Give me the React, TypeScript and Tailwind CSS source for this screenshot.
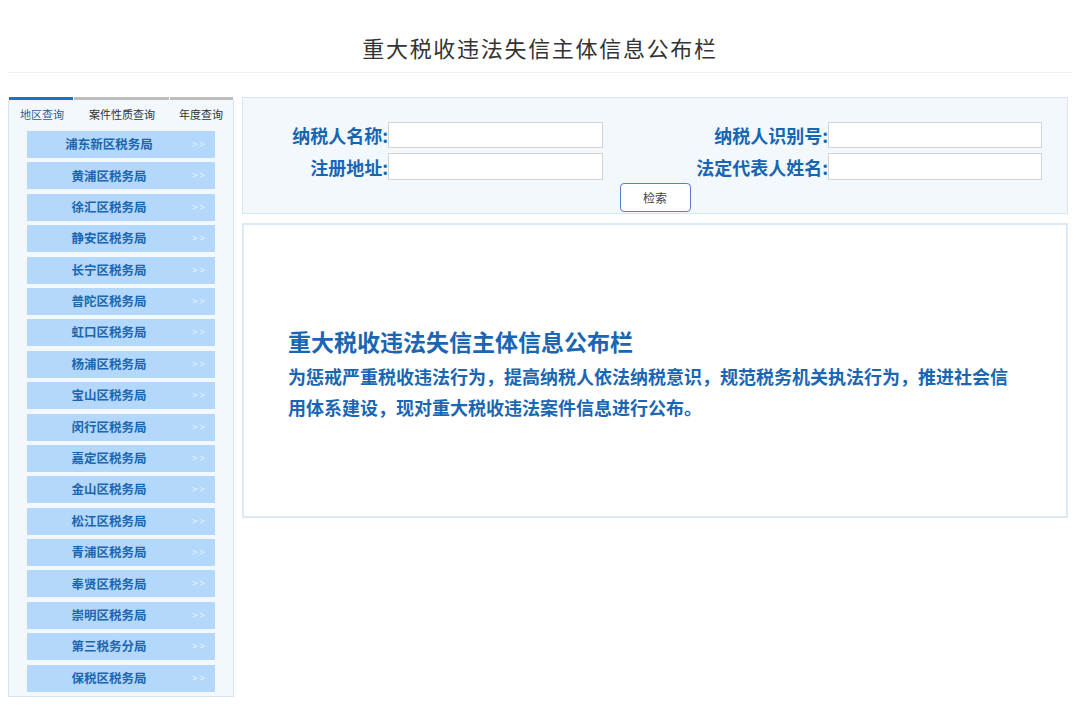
import React from "react";

const offices = [
  "浦东新区税务局",
  "黄浦区税务局",
  "徐汇区税务局",
  "静安区税务局",
  "长宁区税务局",
  "普陀区税务局",
  "虹口区税务局",
  "杨浦区税务局",
  "宝山区税务局",
  "闵行区税务局",
  "嘉定区税务局",
  "金山区税务局",
  "松江区税务局",
  "青浦区税务局",
  "奉贤区税务局",
  "崇明区税务局",
  "第三税务分局",
  "保税区税务局",
];

const font = { fontFamily: '"Noto Sans CJK SC", "Noto Sans", sans-serif' };

export default function App() {
  return (
    <div className="w-[1080px] h-[711px] bg-white overflow-hidden" style={font}>
      {/* header */}
      <div className="mx-[8px] h-[73px] border-b border-[#eeeeee] flex items-center justify-center pt-[22px]">
        <h1 className="text-[22px] leading-[30px] tracking-[1.7px] text-[#333333] font-normal">
          重大税收违法失信主体信息公布栏
        </h1>
      </div>

      <div className="flex mt-[24px] ml-[8px] gap-[8px]">
        {/* sidebar */}
        <div className="w-[226px] h-[600px] flex flex-col">
          <div className="flex h-[3px] pl-[1px]">
            <div className="w-[64px] bg-[#1a73c8]" />
            <div className="w-[95px] ml-[1px] bg-[#bdbdbd]" />
            <div className="w-[63px] ml-[1px] bg-[#bdbdbd]" />
          </div>
          <div className="flex-1 bg-[#f3f8fd] border border-t-0 border-[#d6e4f2] flex flex-col">
            <div className="flex h-[28px] items-center text-[11px] pl-[1px]">
              <div className="w-[64px] text-center text-[#2b5d9c]">地区查询</div>
              <div className="w-[96px] text-center text-[#333333]">案件性质查询</div>
              <div className="w-[62px] text-center text-[#333333]">年度查询</div>
            </div>
            <div className="flex flex-col gap-[4.4px] pl-[18px] pt-[3px]">
              {offices.map((o) => (
                <div
                  key={o}
                  className="w-[188px] h-[27px] bg-[#b3d8fb] flex items-center relative"
                >
                  <span className="w-full pr-[24px] text-center text-[12.5px] font-bold text-[#1b66b0]">
                    {o}
                  </span>
                  <span className="absolute right-[8px] top-[7px] text-[10px] leading-[12px] tracking-[2px] text-[#e8f3ff]">
                    &gt;&gt;
                  </span>
                </div>
              ))}
            </div>
          </div>
        </div>

        {/* right column */}
        <div className="w-[826px] flex flex-col gap-[9px]">
          <div className="h-[117px] bg-[#f3f8fc] border border-[#d9e6f2] pt-[24px] flex flex-col">
            <div className="flex items-center h-[26px]">
              <div className="w-[145px] text-right text-[18px] font-bold text-[#1766b2] leading-[26px]">纳税人名称:</div>
              <div className="w-[215px] h-[26px] bg-white border border-[#d4d4d4]" />
              <div className="w-[225px] text-right text-[18px] font-bold text-[#1766b2] leading-[26px]">纳税人识别号:</div>
              <div className="w-[214px] h-[26px] bg-white border border-[#d4d4d4]" />
            </div>
            <div className="flex items-center h-[27px] mt-[5px]">
              <div className="w-[145px] text-right text-[18px] font-bold text-[#1766b2] leading-[26px]">注册地址:</div>
              <div className="w-[215px] h-[27px] bg-white border border-[#d4d4d4]" />
              <div className="w-[225px] text-right text-[18px] font-bold text-[#1766b2] leading-[26px]">法定代表人姓名:</div>
              <div className="w-[214px] h-[27px] bg-white border border-[#d4d4d4]" />
            </div>
            <div className="flex justify-center mt-[3px]">
              <button className="w-[71px] h-[29px] bg-white border border-[#5a7fc6] rounded-[4px] text-[12px] text-[#444444]">
                检索
              </button>
            </div>
          </div>

          <div className="h-[295px] bg-white border-2 border-[#dde9f5] pl-[44px] pt-[101px]">
            <h2 className="text-[23px] leading-[30px] font-bold text-[#1a66b3]">
              重大税收违法失信主体信息公布栏
            </h2>
            <p className="mt-[5px] w-[728px] text-[18px] leading-[31px] font-bold text-[#1a66b3]">
              为惩戒严重税收违法行为，提高纳税人依法纳税意识，规范税务机关执法行为，推进社会信用体系建设，现对重大税收违法案件信息进行公布。
            </p>
          </div>
        </div>
      </div>
    </div>
  );
}
